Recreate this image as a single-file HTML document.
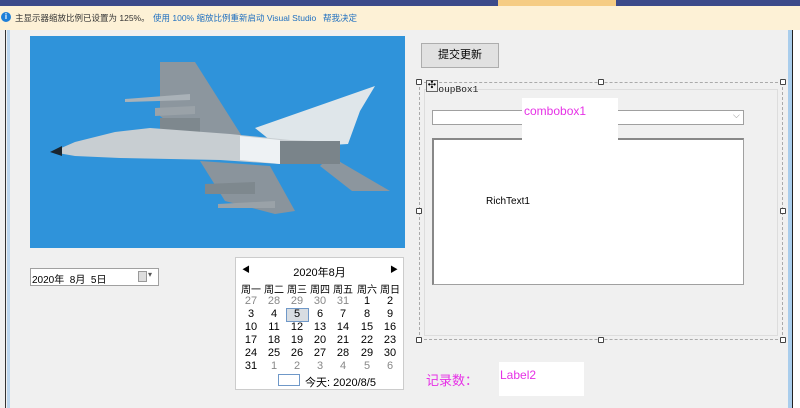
<!DOCTYPE html>
<html><head><meta charset="utf-8">
<style>
*{margin:0;padding:0;box-sizing:border-box}
body{width:800px;height:408px;overflow:hidden;background:#f0f0f0;position:relative;font-family:"Liberation Sans","Noto Sans CJK SC",sans-serif;font-size:11px;color:#000}
.a{position:absolute;white-space:nowrap}
.h{position:absolute;width:6px;height:6px;border:1px solid #444;background:#fff;border-radius:1px}
.cal span{position:absolute;width:24px;text-align:center;font-size:11px}
.g{color:#888}
</style></head><body>
<div class="a" style="left:0;top:0;width:800px;height:6px;background:#3c4a8a"></div>
<div class="a" style="left:498px;top:0;width:118px;height:6px;background:#f5cc84"></div>
<div class="a" style="left:0;top:6px;width:800px;height:24px;background:#fdf1d6"></div>
<div class="a" style="left:1px;top:12px;width:10px;height:10px;border-radius:50%;background:#1e7fd8;color:#fff;font-size:8px;text-align:center;line-height:10px;font-weight:bold">i</div>
<div class="a" style="left:15px;top:12px;font-size:8.5px;color:#333">主显示器缩放比例已设置为 125%。</div>
<div class="a" style="left:153px;top:12px;font-size:8.5px;color:#1e6fc0">使用 100% 缩放比例重新启动 Visual Studio</div>
<div class="a" style="left:323px;top:12px;font-size:8.5px;color:#1e6fc0">帮我决定</div>
<div class="a" style="left:5px;top:30px;width:1px;height:378px;background:#333"></div>
<div class="a" style="left:7px;top:30px;width:3px;height:378px;background:#bcd6ee"></div>
<div class="a" style="left:788px;top:30px;width:4px;height:378px;background:#a9cdec"></div>
<div class="a" style="left:792px;top:30px;width:1px;height:378px;background:#222"></div>
<div class="a" style="left:793px;top:30px;width:7px;height:378px;background:#fff"></div>

<svg class="a" style="left:30px;top:36px" width="375" height="212" viewBox="0 0 375 212">
<rect width="375" height="212" fill="#2f93da"/>
<polygon points="130,26 165,26 215,105 170,110 130,80" fill="#8c969e"/>
<polygon points="170,125 240,130 265,175 245,178 195,165" fill="#8a949c"/>
<polygon points="95,63 160,58 160,64 95,66" fill="#aab2b8"/>
<polygon points="125,72 165,70 165,78 125,80" fill="#9aa2a8"/>
<polygon points="130,82 170,82 170,96 130,96" fill="#7e888e"/>
<polygon points="188,168 245,165 245,172 188,172" fill="#9aa2a8"/>
<polygon points="175,148 225,146 225,158 175,158" fill="#7e888e"/>
<polygon points="225,92 345,50 330,75 318,108 250,112" fill="#dfe6ea"/>
<polygon points="300,120 360,155 322,155 290,130" fill="#8c969e"/>
<polygon points="22,116 45,106 85,96 120,92 200,98 260,104 310,106 310,128 250,128 190,124 90,122 45,120" fill="#c8ced2"/>
<polygon points="210,100 250,104 250,128 210,124" fill="#eef2f4"/>
<polygon points="250,105 310,105 310,128 250,128" fill="#7a848a"/>
<polygon points="20,116 32,110 32,120" fill="#1a2630"/>
</svg>

<div class="a" style="left:30px;top:268px;width:129px;height:18px;background:#fff;border:1px solid #a0a0a0"></div>
<div class="a" style="left:32px;top:271px;font-size:10px">2020年&nbsp; 8月&nbsp; 5日</div>
<div class="a" style="left:138px;top:271px;width:9px;height:11px;border:1px solid #999;background:#ddd"></div>
<div class="a" style="left:148px;top:270px;font-size:8px;color:#555">▾</div>

<div class="a cal" style="left:235px;top:257px;width:169px;height:133px;background:#fff;border:1px solid #ccc">
<span style="left:-2px;top:6px;font-size:8px">◀</span>
<span style="left:146px;top:6px;font-size:8px">▶</span>
<div class="a" style="left:0;top:6px;width:167px;text-align:center;font-size:11px">2020年8月</div>
<span style="left:3px;top:23px;font-size:10px">周一</span><span style="left:26px;top:23px;font-size:10px">周二</span><span style="left:49px;top:23px;font-size:10px">周三</span><span style="left:72px;top:23px;font-size:10px">周四</span><span style="left:95px;top:23px;font-size:10px">周五</span><span style="left:119px;top:23px;font-size:10px">周六</span><span style="left:142px;top:23px;font-size:10px">周日</span>
<span class="g" style="left:3px;top:37px">27</span><span class="g" style="left:26px;top:37px">28</span><span class="g" style="left:49px;top:37px">29</span><span class="g" style="left:72px;top:37px">30</span><span class="g" style="left:95px;top:37px">31</span><span style="left:119px;top:37px">1</span><span style="left:142px;top:37px">2</span>
<div class="a" style="left:50px;top:50px;width:23px;height:14px;background:#d8dde2;border:1px solid #6f98c8"></div>
<span style="left:3px;top:50px">3</span><span style="left:26px;top:50px">4</span><span style="left:49px;top:50px">5</span><span style="left:72px;top:50px">6</span><span style="left:95px;top:50px">7</span><span style="left:119px;top:50px">8</span><span style="left:142px;top:50px">9</span>
<span style="left:3px;top:63px">10</span><span style="left:26px;top:63px">11</span><span style="left:49px;top:63px">12</span><span style="left:72px;top:63px">13</span><span style="left:95px;top:63px">14</span><span style="left:119px;top:63px">15</span><span style="left:142px;top:63px">16</span>
<span style="left:3px;top:76px">17</span><span style="left:26px;top:76px">18</span><span style="left:49px;top:76px">19</span><span style="left:72px;top:76px">20</span><span style="left:95px;top:76px">21</span><span style="left:119px;top:76px">22</span><span style="left:142px;top:76px">23</span>
<span style="left:3px;top:89px">24</span><span style="left:26px;top:89px">25</span><span style="left:49px;top:89px">26</span><span style="left:72px;top:89px">27</span><span style="left:95px;top:89px">28</span><span style="left:119px;top:89px">29</span><span style="left:142px;top:89px">30</span>
<span style="left:3px;top:102px">31</span><span class="g" style="left:26px;top:102px">1</span><span class="g" style="left:49px;top:102px">2</span><span class="g" style="left:72px;top:102px">3</span><span class="g" style="left:95px;top:102px">4</span><span class="g" style="left:119px;top:102px">5</span><span class="g" style="left:142px;top:102px">6</span>
<div class="a" style="left:42px;top:116px;width:22px;height:12px;border:1px solid #6f98c8"></div>
<div class="a" style="left:69px;top:116px;font-size:11px">今天: 2020/8/5</div>
</div>

<div class="a" style="left:421px;top:43px;width:78px;height:25px;background:#e1e1e1;border:1px solid #adadad;text-align:center;line-height:23px;font-size:11px">提交更新</div>

<div class="a" style="left:419px;top:82px;width:364px;height:258px;border:1px dashed #aaa"></div>
<div class="a" style="left:424px;top:89px;width:354px;height:247px;border:1px solid #ddd"></div>
<div class="a" style="left:427px;top:84px;font-family:'Liberation Mono',monospace;font-size:9.5px;color:#222">GroupBox1</div>
<div class="a" style="left:426px;top:80px;width:12px;height:12px;border:1px solid #666;background:#eee;font-size:10px;line-height:10px;text-align:center">✣</div>
<div class="h" style="left:416px;top:79px"></div><div class="h" style="left:598px;top:79px"></div><div class="h" style="left:780px;top:79px"></div>
<div class="h" style="left:416px;top:208px"></div><div class="h" style="left:780px;top:208px"></div>
<div class="h" style="left:416px;top:337px"></div><div class="h" style="left:598px;top:337px"></div><div class="h" style="left:780px;top:337px"></div>

<div class="a" style="left:432px;top:110px;width:312px;height:15px;background:#fff;border:1px solid #a0a0a0"></div>
<div class="a" style="left:733px;top:110px;font-size:9px;color:#888">⌵</div>
<div class="a" style="left:432px;top:138px;width:312px;height:147px;background:#fff;border:1px solid #a0a0a0;border-top:2px solid #888;border-left:2px solid #888"></div>
<div class="a" style="left:486px;top:196px;font-size:10px">RichText1</div>
<div class="a" style="left:522px;top:98px;width:96px;height:42px;background:#fff"></div>
<div class="a" style="left:524px;top:104px;font-size:12px;color:#e631e6">combobox1</div>

<div class="a" style="left:426px;top:370px;font-size:13px;color:#e631e6">记录数：</div>
<div class="a" style="left:499px;top:362px;width:85px;height:34px;background:#fff"></div>
<div class="a" style="left:500px;top:368px;font-size:12px;color:#e631e6">Label2</div>
</body></html>
